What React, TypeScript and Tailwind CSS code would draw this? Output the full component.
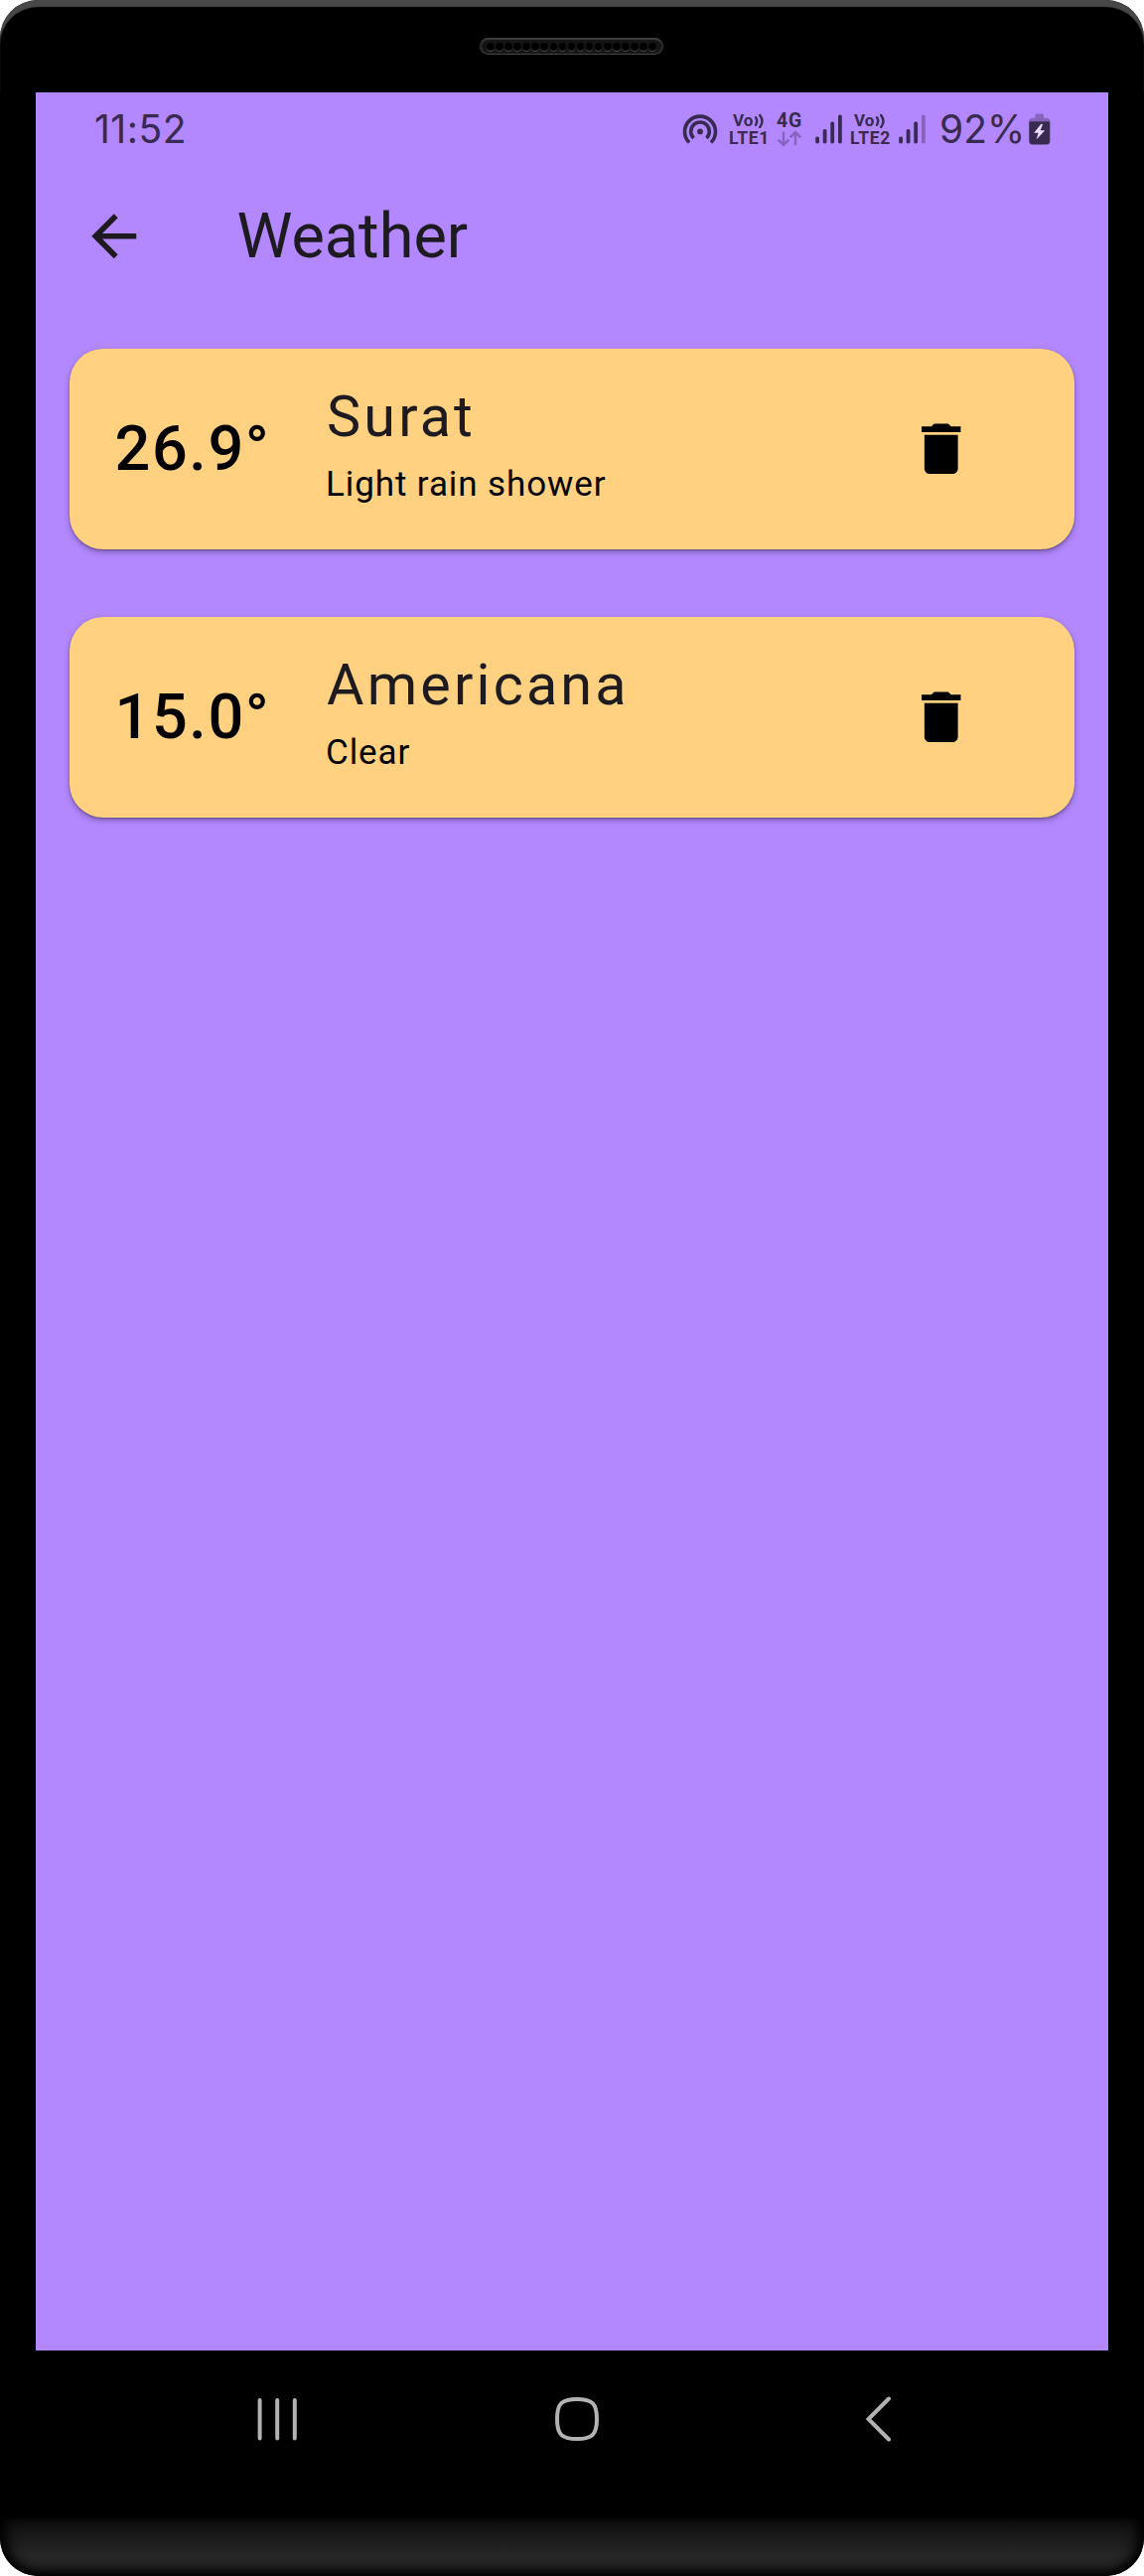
import React from "react";

const INK = "#382a50";

function Hotspot() {
  return (
    <svg className="h-8 w-9 shrink-0" viewBox="0 0 36 32" fill="none" stroke={INK} strokeWidth="3.6">
      <path d="M7 29.5A15.5 15.5 0 1 1 29 29.5" />
      <path d="M11.6 25A9.3 9.3 0 1 1 24.4 25" />
      <circle cx="18" cy="18.4" r="2.9" fill={INK} stroke="none" />
    </svg>
  );
}

function VoLte({ sim }: { sim: string }) {
  return (
    <div className="h-[35px] w-[42px] shrink-0 font-bold text-[#382a50]">
      <div className="flex h-[17px] pl-1 text-[17px] leading-[17px]">
        <span>Vo</span>
        <svg className="ml-px h-4 w-3 shrink-0" viewBox="0 0 12 16" fill="none" stroke={INK} strokeWidth="2.4" strokeLinecap="round">
          <path d="M2 5.2Q4.4 9 2 12.8" />
          <path d="M6.2 3Q10.8 9 6.2 15" />
        </svg>
      </div>
      <div className="h-[18px] text-[17.5px] leading-[18px] tracking-[0.7px]">{sim}</div>
    </div>
  );
}

function FourG() {
  return (
    <div className="h-[35px] w-7 shrink-0 font-bold text-[#382a50]">
      <div className="h-[18px] text-[19.5px] leading-[18px] tracking-[0.8px]">4G</div>
      <svg className="h-[17px] w-7" viewBox="0 0 28 17" fill="none" stroke="#8763be" strokeWidth="2.5">
        <path d="M7 1.6V14.6M1.6 9.6L7 15L12.4 9.6" />
        <path d="M19 15.2V2.2M13.6 7.4L19 2L24.4 7.4" />
      </svg>
    </div>
  );
}

function Signal({ weak = false }: { weak?: boolean }) {
  return (
    <svg className="h-[30px] w-[27px] shrink-0" viewBox="0 0 27 30" fill={INK}>
      <rect x="0.2" y="22.4" width="3.8" height="7" rx="1.6" />
      <rect x="7.7" y="15" width="3.8" height="14.4" rx="1.6" />
      <rect x="15.3" y="7.6" width="3.8" height="21.8" rx="1.6" />
      <rect x="23" y="0.4" width="3.8" height="29" rx="1.6" fill={weak ? "#8763be" : INK} />
    </svg>
  );
}

function Battery() {
  return (
    <svg className="h-8 w-[22px] shrink-0" viewBox="0 0 22 32">
      <path d="M6.5 2.2Q6.5 0.6 8 0.6H13.5Q15 0.6 15 2.2V4.8H18Q21.3 4.8 21.3 8.5H0.3Q0.3 4.8 3.5 4.8H6.5Z" fill="#8763be" />
      <path d="M0.3 8.2H21.3V28Q21.3 31.6 17.8 31.6H3.8Q0.3 31.6 0.3 28Z" fill={INK} />
      <path d="M12.6 10.6L5.2 19.8H9.6L7.6 26.6L16.2 17.2H11.6L14 11.6Z" fill="#e9dcff" />
    </svg>
  );
}

function StatusBar() {
  return (
    <div className="flex h-[74px] items-center pl-[59px] text-[#382a50]">
      <div className="w-[592px] shrink-0 font-[Inter,sans-serif] text-[39px] leading-[40px] tracking-[0.5px]">11:52</div>
      <Hotspot />
      <div className="ml-[11px]"><VoLte sim="LTE1" /></div>
      <div className="ml-[6px]"><FourG /></div>
      <div className="ml-[11px]"><Signal /></div>
      <div className="ml-[8px]"><VoLte sim="LTE2" /></div>
      <div className="ml-[7px]"><Signal weak /></div>
      <div className="ml-[14px] w-[90px] shrink-0 font-[Inter,sans-serif] text-[39px] leading-[40px]">92%</div>
      <Battery />
    </div>
  );
}

function AppBar() {
  return (
    <header className="flex h-[142px] items-center pl-[45px] text-[#1d1b20]">
      <svg className="size-[67.5px] shrink-0" viewBox="0 0 24 24" fill="currentColor">
        <path d="M20 11H7.83l5.59-5.59L12 4l-8 8 8 8 1.41-1.41L7.83 13H20v-2z" />
      </svg>
      <h1 className="ml-[90px] text-[63px] leading-[74px]">Weather</h1>
    </header>
  );
}

function WeatherCard({ temp, city, condition }: { temp: string; city: string; condition: string }) {
  return (
    <article className="flex h-[202px] items-center rounded-[34px] bg-[#ffd180] pl-[45.5px] shadow-[0_3px_6px_rgba(0,0,0,0.28),0_1px_2px_rgba(0,0,0,0.3)]">
      <div className="w-[213.5px] shrink-0 text-[63px] leading-[74px] font-medium tracking-[1.6px] text-black">{temp}</div>
      <div className="flex-1 self-start pt-[37px]">
        <h2 className="text-[57.5px] leading-[64px] tracking-[3.15px] text-[#1d1b20]">{city}</h2>
        <p className="mt-[15px] -ml-px text-[35px] leading-[42px] tracking-[0.9px] text-black">{condition}</p>
      </div>
      <svg className="mr-[101px] size-[67.5px] shrink-0" viewBox="0 0 24 24" fill="#000">
        <path d="M6 19c0 1.1.9 2 2 2h8c1.1 0 2-.9 2-2V7H6v12zM19 4h-3.5l-1-1h-5l-1 1H5v2h14V4z" />
      </svg>
    </article>
  );
}

function NavBar() {
  return (
    <nav className="flex h-[169px] pt-[46px]">
      <svg className="ml-[223px] h-[46px] w-10" viewBox="0 0 40 46" stroke="#b2b2b2" strokeWidth="4" strokeLinecap="round">
        <path d="M2.6 4V42.5M20.2 4V42.5M37.8 4V42.5" />
      </svg>
      <svg className="ml-[259px] h-[46px] w-[46px]" viewBox="0 0 46 46" fill="none" stroke="#b2b2b2" strokeWidth="4">
        <path d="M23 3C38.5 3 43 7.5 43 23S38.5 43 23 43S3 38.5 3 23S7.5 3 23 3Z" />
      </svg>
      <svg className="ml-[266px] h-[46px] w-8" viewBox="0 0 32 46" fill="none" stroke="#b2b2b2" strokeWidth="4" strokeLinecap="round">
        <path d="M25 2.5L4.5 23L25 43.5" />
      </svg>
    </nav>
  );
}

function Speaker() {
  return (
    <div className="mt-[38px] ml-[483px] flex h-[17px] w-[185px] items-center justify-between rounded-full border-t-2 border-b border-t-[#3c3c3c] border-b-[#444] bg-[#151515] px-[7px] shadow-[inset_2px_0_1px_#2c2c2c,inset_-2px_0_1px_#2c2c2c]">
      {Array.from({ length: 19 }, (_, i) => (
        <span key={i} className="size-[7.5px] rounded-full bg-black shadow-[0_1px_0_#4a4a4a]" />
      ))}
    </div>
  );
}

export default function App() {
  return (
    <div className="h-[2593px] w-[1152px] bg-white font-[Roboto,sans-serif]">
      <div className="flex h-full flex-col overflow-hidden rounded-[38px] bg-black">
        <div className="h-[93px] shrink-0 rounded-t-[38px] shadow-[inset_0_7px_1px_#484848]">
          <div className="flow-root">
            <Speaker />
          </div>
        </div>
        <main className="mx-[36px] h-[2273px] shrink-0 bg-[#b388ff]">
          <StatusBar />
          <AppBar />
          <section className="flex flex-col gap-[68px] px-[34px] pt-[42px]">
            <WeatherCard temp="26.9°" city="Surat" condition="Light rain shower" />
            <WeatherCard temp="15.0°" city="Americana" condition="Clear" />
          </section>
        </main>
        <div className="mx-[36px] shrink-0">
          <NavBar />
        </div>
        <div className="h-[58px] shrink-0 rounded-b-[38px] bg-linear-to-b from-[#0c0c0c] via-[#272727] via-65% to-[#262626] shadow-[inset_12px_0_14px_-6px_#000,inset_-12px_0_14px_-6px_#000,inset_0_-8px_12px_-3px_#000]" />
      </div>
    </div>
  );
}
